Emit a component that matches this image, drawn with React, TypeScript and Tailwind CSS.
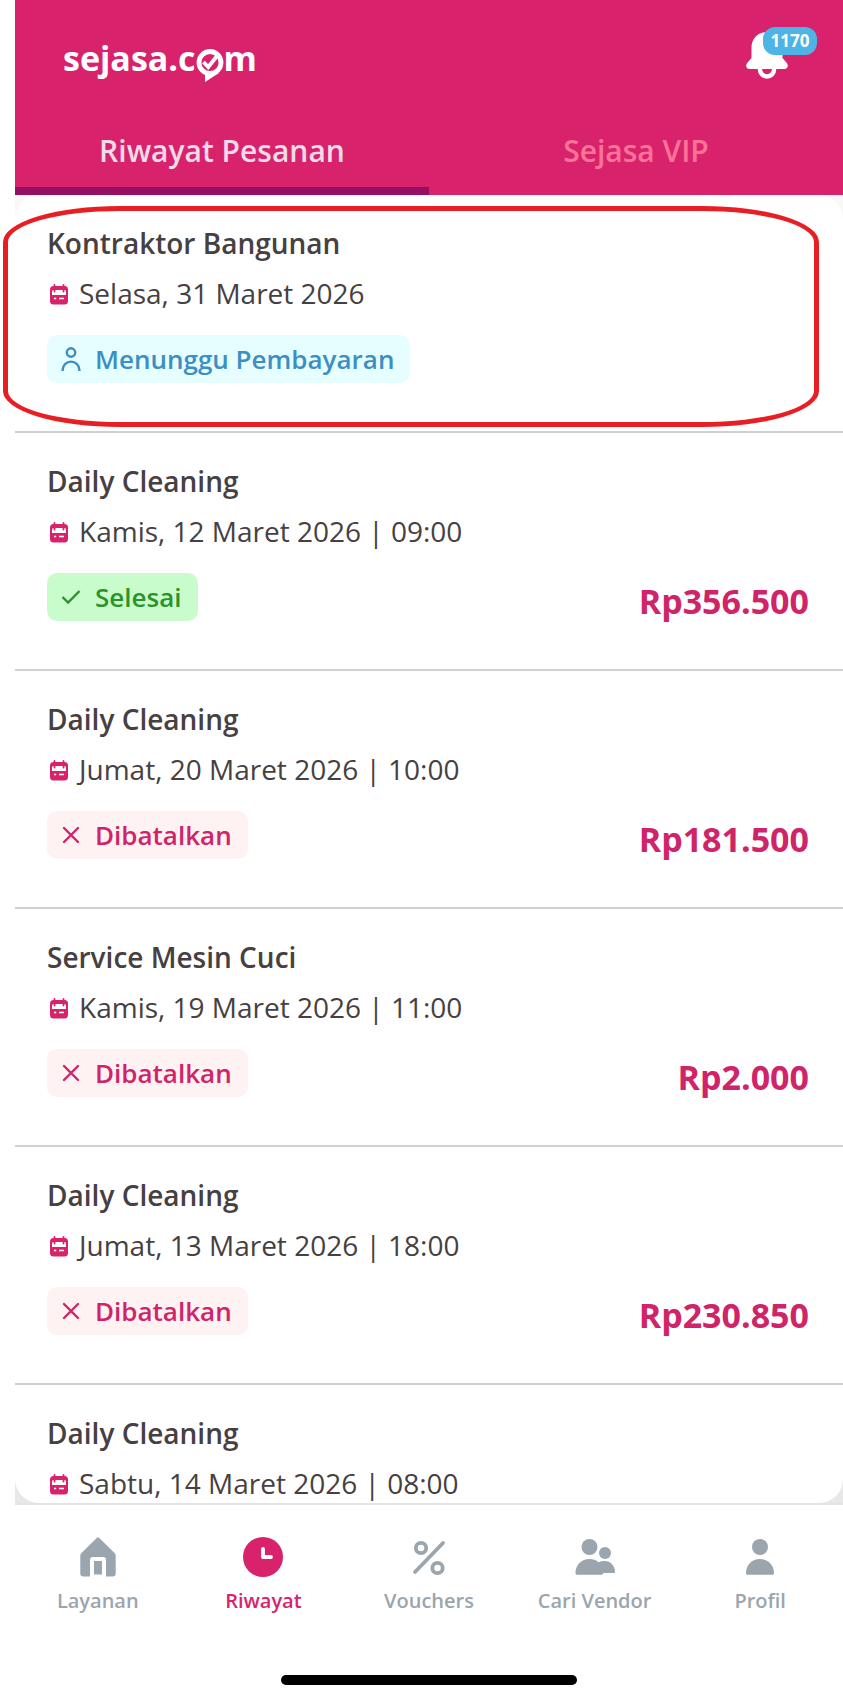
import type { ReactNode } from "react"
import clsx from "clsx"

type Status = "waiting" | "done" | "cancelled"

type Order = {
  title: string
  date: string
  status?: Status
  price?: string
}

const ORDERS: Order[] = [
  { title: "Kontraktor Bangunan", date: "Selasa, 31 Maret 2026", status: "waiting" },
  { title: "Daily Cleaning", date: "Kamis, 12 Maret 2026 | 09:00", status: "done", price: "Rp356.500" },
  { title: "Daily Cleaning", date: "Jumat, 20 Maret 2026 | 10:00", status: "cancelled", price: "Rp181.500" },
  { title: "Service Mesin Cuci", date: "Kamis, 19 Maret 2026 | 11:00", status: "cancelled", price: "Rp2.000" },
  { title: "Daily Cleaning", date: "Jumat, 13 Maret 2026 | 18:00", status: "cancelled", price: "Rp230.850" },
  { title: "Daily Cleaning", date: "Sabtu, 14 Maret 2026 | 08:00" },
]

function PersonOutlineIcon() {
  return (
    <svg viewBox="0 0 24 24" className="size-6" fill="none" stroke="currentColor" strokeWidth="2.4">
      <circle cx="12" cy="5.500" r="4.200" />
      <path d="M3.600 24v-1a8.400 8.400 0 0 1 16.800 0v1" />
    </svg>
  )
}

function CheckIcon() {
  return (
    <svg viewBox="0 0 24 24" className="size-6" fill="none" stroke="currentColor" strokeWidth="2.4">
      <path d="M3.500 12l5.600 5.500L20.500 6" />
    </svg>
  )
}

function CrossIcon() {
  return (
    <svg viewBox="0 0 24 24" className="size-6" fill="none" stroke="currentColor" strokeWidth="2.4" strokeLinecap="round">
      <path d="M5 5l14 14M19 5L5 19" />
    </svg>
  )
}

const STATUSES: Record<Status, { label: string; className: string; icon: ReactNode }> = {
  waiting: {
    label: "Menunggu Pembayaran",
    className: "bg-[#e6feff] text-[#3d8fc2]",
    icon: <PersonOutlineIcon />,
  },
  done: {
    label: "Selesai",
    className: "bg-[#c9fccd] text-[#299429]",
    icon: <CheckIcon />,
  },
  cancelled: {
    label: "Dibatalkan",
    className: "bg-[#fff2f3] text-[#d02368]",
    icon: <CrossIcon />,
  },
}

function CalendarIcon() {
  return (
    <svg viewBox="0 0 24 24" className="size-6 shrink-0">
      <rect x="3" y="5" width="18" height="18.500" rx="3.500" fill="#d8236c" />
      <path d="M5 10.500a1.500 1.500 0 0 1 1.500-1.500h11a1.500 1.500 0 0 1 1.500 1.500V14H5z" fill="#fff" />
      <path d="M7.500 4v6.500M16.500 4v6.500" stroke="#d8236c" strokeWidth="1.800" strokeLinecap="round" />
      <path d="M7 17.500h2.200M12 17.500h5" stroke="#fff" strokeWidth="1.600" />
    </svg>
  )
}

function BellIcon() {
  return (
    <svg viewBox="0 0 42 48" className="h-12 w-[42px]">
      <circle cx="21" cy="37.500" r="7" fill="none" stroke="#fff" strokeWidth="4.500" />
      <path
        d="M21 0C12 0 5.500 6.600 5.500 15.500V26L1 31.200C-.8 34 .6 37 3.600 37h34.800c3 0 4.400-3 2.600-5.800L36.500 26V15.500C36.500 6.600 30 0 21 0z"
        fill="#fff"
      />
      <path d="M16.500 37.200h9a4.500 4.500 0 0 1-9 0z" fill="#d8236c" />
    </svg>
  )
}

function Logo() {
  return (
    <a href="#" aria-label="sejasa.com" className="flex h-11 items-center text-[34px] leading-[44px] font-bold text-white">
      <span>sejasa.c</span>
      <svg viewBox="0 0 28 33" className="mt-[14px] h-[33px] w-7" fill="none" stroke="#fff">
        <path d="M9 23v10l14-9z" fill="#fff" stroke="none" />
        <circle cx="14" cy="13.500" r="11" strokeWidth="4.800" fill="#d8236c" />
        <path d="M7.500 13l4.700 5L21.500 6.500" strokeWidth="3.800" />
      </svg>
      <span>m</span>
    </a>
  )
}

function HomeIcon() {
  return (
    <svg viewBox="0 0 40 40" className="size-10" fill="currentColor">
      <path d="M19 .7a1.500 1.500 0 0 1 2 0L36.500 16c.8.8 1.200 1.600 1.200 2.600v18a3 3 0 0 1-3 3H28V23a3 3 0 0 0-3-3H15a3 3 0 0 0-3 3v16.600H5.300a3 3 0 0 1-3-3v-18c0-1 .4-1.800 1.200-2.600z" />
      <path d="M16 24h8v13.500h-8z" />
    </svg>
  )
}

function ClockIcon() {
  return (
    <svg viewBox="0 0 40 40" className="size-10">
      <circle cx="20" cy="20" r="20" fill="currentColor" />
      <path d="M20 12v8h8" fill="none" stroke="#fff" strokeWidth="3.800" strokeLinecap="round" strokeLinejoin="round" />
    </svg>
  )
}

function PercentIcon() {
  return (
    <svg viewBox="0 0 40 40" className="size-10" fill="none" stroke="currentColor">
      <path d="M6 35L34 6" strokeWidth="3.800" strokeLinecap="round" />
      <circle cx="12" cy="11" r="5.200" strokeWidth="3.800" />
      <circle cx="28.500" cy="31" r="5.200" strokeWidth="3.800" />
    </svg>
  )
}

function VendorIcon() {
  return (
    <svg viewBox="0 0 40 40" className="size-10" fill="currentColor">
      <circle cx="14.500" cy="10" r="8" />
      <circle cx="30" cy="16" r="6" />
      <path d="M.5 36C.5 28 6.500 22 14.500 22c3.600 0 6.700 1.200 9 3.200C25.300 24.400 27.500 24 30 24c5.500 0 10 5 10 10.500 0 1-.6 1.500-1.500 1.500H28.300c-.3 1.200-1 1.800-2 1.800H2c-1 0-1.500-.7-1.500-1.800z" />
    </svg>
  )
}

function ProfileIcon() {
  return (
    <svg viewBox="0 0 40 40" className="size-10" fill="currentColor">
      <circle cx="20" cy="10" r="8" />
      <path d="M6 36c0-8 6-14 14-14s14 6 14 14c0 1.200-.6 1.800-1.600 1.800H7.600C6.600 37.800 6 37.200 6 36z" />
    </svg>
  )
}

const NAV_ITEMS = [
  { label: "Layanan", icon: <HomeIcon /> },
  { label: "Riwayat", icon: <ClockIcon />, active: true },
  { label: "Vouchers", icon: <PercentIcon /> },
  { label: "Cari Vendor", icon: <VendorIcon /> },
  { label: "Profil", icon: <ProfileIcon /> },
]

function OrderRow({ order }: { order: Order }) {
  const status = order.status && STATUSES[order.status]

  return (
    <li className="border-b-2 border-[#d0d0d0] pt-[30px] pr-[34px] pb-12 pl-8">
      <h2 className="text-[28px] leading-9 font-semibold">{order.title}</h2>
      <p className="mt-[14px] flex items-center gap-2 text-[28px] leading-9">
        <CalendarIcon />
        {order.date}
      </p>
      {status && (
        <div className="mt-6 flex items-end justify-between">
          <span
            className={clsx(
              "flex h-12 items-center gap-3 rounded-[10px] pr-4 pb-px pl-3 text-[26px] leading-9 font-semibold",
              status.className,
            )}
          >
            {status.icon}
            {status.label}
          </span>
          {order.price && <span className="text-[34px] leading-10 font-bold text-[#cf2468]">{order.price}</span>}
        </div>
      )}
    </li>
  )
}

export default function App() {
  return (
    <div className="flex h-screen flex-col bg-white pl-[15px] font-['Open_Sans',sans-serif] text-[#474042]">
      <header className="bg-[#d8236c]">
        <div className="flex items-start justify-between pt-8 pr-[55px] pl-12">
          <div className="pt-1">
            <Logo />
          </div>
          <button type="button" aria-label="Notifikasi" className="relative">
            <BellIcon />
            <span className="absolute -top-[5px] left-[17px] flex h-7 w-[54px] items-center justify-center rounded-xl bg-[#4eb3e5] text-[17px] leading-6 font-bold text-white">
              1170
            </span>
          </button>
        </div>

        {/* Tab */}
        <div role="tablist" className="mt-[39px] grid grid-cols-2 text-[30px] leading-10 font-semibold">
          <button type="button" role="tab" aria-selected className="border-b-8 border-[#960f63] pt-3 pb-4 text-[#f1dbe8]">
            Riwayat Pesanan
          </button>
          <button type="button" role="tab" aria-selected={false} className="border-b-8 border-transparent pt-3 pb-4 text-[#fb7497]">
            Sejasa VIP
          </button>
        </div>
      </header>

      <main className="relative min-h-0 flex-1 bg-linear-to-b from-[#f8f8f8] to-[#e8e8e8]">
        <ul className="h-full overflow-hidden rounded-3xl bg-white">
          {ORDERS.map((order, index) => (
            <OrderRow key={index} order={order} />
          ))}
        </ul>
        {/* Highlight around the first order */}
        <div className="pointer-events-none absolute top-[11px] right-6 -left-3 h-[221px] rounded-[117px/36px] border-5 border-[#e81e25]" />
      </main>

      <nav className="border-t-2 border-[#e4e4e4] bg-white pt-8">
        <div className="grid grid-cols-5">
          {NAV_ITEMS.map(({ label, icon, active }) => (
            <a
              key={label}
              href="#"
              className={clsx(
                "flex flex-col items-center gap-[10px] text-[20px] leading-7 font-semibold",
                active ? "text-[#d8236c]" : "text-[#9ba5ad]",
              )}
            >
              {icon}
              {label}
            </a>
          ))}
        </div>
        <div className="mx-auto mt-[60px] mb-4 h-[10px] w-[296px] rounded-full bg-black" />
      </nav>
    </div>
  )
}
